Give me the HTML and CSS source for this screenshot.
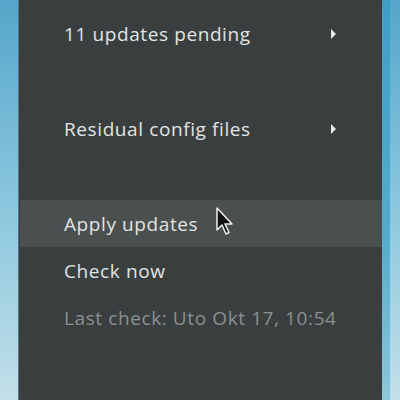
FILE: index.html
```html
<!DOCTYPE html>
<html lang="en">
<head>
    <meta charset="UTF-8">
    <title>Updates menu</title>
    <link rel="stylesheet" href="styles.css">
</head>
<body>
    <div class="desk">
        <div class="menu">
            <div class="item">
                <span>11 updates pending</span>
                <span class="arrow"></span>
            </div>
            <div class="sep"></div>
            <div class="item">
                <span>Residual config files</span>
                <span class="arrow"></span>
            </div>
            <div class="sep"></div>
            <div class="item hover">
                <span>Apply updates</span>
                <svg class="cursor" width="20" height="30" viewBox="0 0 20 30">
                    <path d="M2 1 L2 23 L7 18 L11 27 L14 25.5 L10 17 L17 17 Z" fill="#111" stroke="#eee" stroke-width="1.5" stroke-linejoin="round"/>
                </svg>
            </div>
            <div class="item">
                <span>Check now</span>
            </div>
            <div class="item dim">
                <span>Last check: Uto Okt 17, 10:54</span>
            </div>
            <div class="sep"></div>
        </div>
        <div class="edge"></div>
    </div>
</body>
</html>
```

FILE: styles.css
```css
body {
    margin: 0;
    width: 400px;
    height: 400px;
    overflow: hidden;
    font-family: "Open Sans", "Noto Sans", sans-serif;
    background: linear-gradient(#55a6cb, #8fc9df 55%, #c2dfe9);
}
.desk {
    display: flex;
    height: 400px;
    padding-left: 18px;
}
.menu {
    width: 364px;
    background: #393f3f;
    padding-top: 10px;
    box-sizing: border-box;
    border-left: 1px solid #5a7480;
    display: flex;
    flex-direction: column;
}
.edge {
    width: 8px;
    background: linear-gradient(#3e9fc6, #54acce 60%, #8cc7dc);
}
.item {
    position: relative;
    height: 47px;
    display: flex;
    align-items: center;
    justify-content: space-between;
    padding: 0 46px 0 44px;
    margin-left: 1px;
    color: #e2e4e3;
    font-size: 19px;
    letter-spacing: 0.6px;
    white-space: nowrap;
}
.item.hover {
    background: #4a5050;
}
.item.dim {
    color: #8b9090;
}
.arrow {
    width: 0;
    height: 0;
    border-top: 5px solid transparent;
    border-bottom: 5px solid transparent;
    border-left: 5px solid #e8e8e8;
}
.sep {
    height: 48px;
    position: relative;
}
.sep::after {
    content: "";
    position: absolute;
    left: 141px;
    top: 22px;
    width: 90px;
    height: 1px;
    background: #353b3b;
}
.cursor {
    position: absolute;
    left: 195px;
    top: 7px;
}
```
